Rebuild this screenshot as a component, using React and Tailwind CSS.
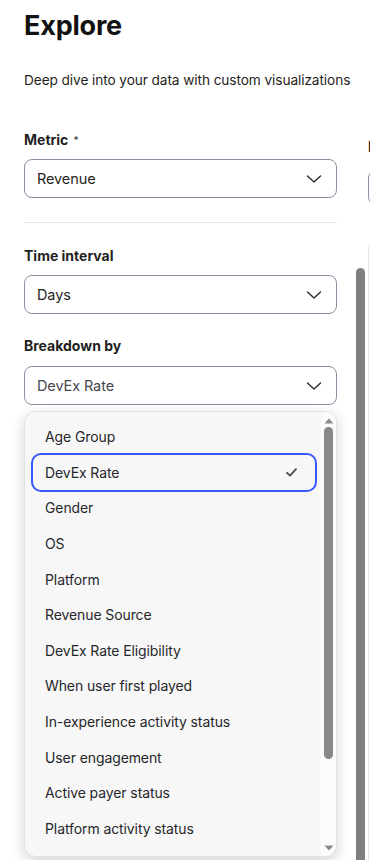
import React from "react";

const Chevron = () => (
  <svg width="16" height="10" viewBox="0 0 16 10" fill="none" className="shrink-0">
    <path d="M1.5 2 L8 8 L14.5 2" stroke="#2b2b2b" strokeWidth="1.4" strokeLinecap="round" strokeLinejoin="round" />
  </svg>
);

const Select = ({ value, muted }) => (
  <div className="flex h-[39px] items-center justify-between rounded-lg border border-[#8c90a2] bg-white pl-[12px] pr-[14px]">
    <span className={`text-[14.5px] tracking-[-0.1px] ${muted ? "text-[#45474f]" : "text-[#1f1f22]"}`}>{value}</span>
    <Chevron />
  </div>
);

const items = [
  "Age Group",
  "DevEx Rate",
  "Gender",
  "OS",
  "Platform",
  "Revenue Source",
  "DevEx Rate Eligibility",
  "When user first played",
  "In-experience activity status",
  "User engagement",
  "Active payer status",
  "Platform activity status",
];

const Up = ({ color = "#8a8a8a" }) => (
  <svg width="10" height="6" viewBox="0 0 10 6"><path d="M5 0.5 L9.5 5.5 L0.5 5.5 Z" fill={color} /></svg>
);
const Down = ({ color = "#8a8a8a" }) => (
  <svg width="10" height="6" viewBox="0 0 10 6"><path d="M0.5 0.5 L9.5 0.5 L5 5.5 Z" fill={color} /></svg>
);

export default function App() {
  return (
    <div className="flex h-[860px] w-[370px] overflow-hidden bg-white font-['Inter',sans-serif] text-[#1f1f22]">
      <div className="relative w-[348px] shrink-0 pl-6 pr-[11px] pt-[9px]">
        <h1 className="text-[27px] font-bold leading-[34px] tracking-[-0.2px] text-[#121214]">Explore</h1>
        <p className="mt-[27px] whitespace-nowrap text-[13.7px] leading-5 tracking-[-0.1px] text-[#1f1f22]">Deep dive into your data with custom visualizations</p>

        <div className="mt-[40px] flex items-center gap-[5px] text-[14px] font-bold leading-5 text-[#1f1f22]">
          Metric <span className="text-[10px] text-[#55575f]">*</span>
        </div>
        <div className="mt-[9px]">
          <Select value="Revenue" />
        </div>

        <div className="mt-[24px] h-px bg-[#e4e4e6]" />

        <div className="mt-[23px] text-[14px] font-bold leading-5">Time interval</div>
        <div className="mt-[9px]">
          <Select value="Days" />
        </div>

        <div className="mt-[22px] text-[14px] font-bold leading-5">Breakdown by</div>
        <div className="relative mt-[10px]">
          <Select value="DevEx Rate" muted />
          <div className="absolute left-0 right-0 top-[45px] flex h-[446px] overflow-hidden rounded-xl border border-[#e2e2e4] bg-[#f7f7f7] shadow-[0_4px_14px_rgba(0,0,0,0.18)]">
            <div className="flex-1 pl-[8px] pr-[6px] pt-[7px]">
              {items.map((it) => {
                const sel = it === "DevEx Rate";
                return (
                  <div
                    key={it}
                    className={`flex h-[35.6px] items-center justify-between rounded-lg pl-[12px] pr-[18px] text-[14px] tracking-[-0.1px] text-[#26272b] ${
                      sel ? "outline-2 outline-[#3658ff]" : ""
                    }`}
                  >
                    <span>{it}</span>
                    {sel && (
                      <svg width="11" height="9" viewBox="0 0 11 9">
                        <path d="M1 4.8 L4 7.6 L10 1.2" stroke="#4a4a4e" strokeWidth="1.8" fill="none" strokeLinecap="round" strokeLinejoin="round" />
                      </svg>
                    )}
                  </div>
                );
              })}
            </div>
            <div className="flex w-[15px] flex-col items-center bg-[#fbfbfb] pt-[6px]">
              <Up />
              <div className="mt-[3px] h-[332px] w-[9px] rounded-full bg-[#888888]" />
              <div className="mt-auto mb-[5px]">
                <Down />
              </div>
            </div>
          </div>
        </div>
      </div>

      <div className="flex w-[20px] shrink-0 flex-col items-center pl-[4px] pt-[128px]">
        <Up color="#7d7d7d" />
        <div className="mt-[140px] h-[600px] w-[9px] shrink-0 rounded-full bg-[#7f7f7f]" />
      </div>

      <div className="min-w-0 flex-1 overflow-hidden pt-[137px]">
        <div className="whitespace-nowrap text-[14px] font-bold leading-5 text-[#1f1f22]">Metric</div>
        <div className="mt-[13px] h-[35px] w-[200px] rounded-lg border border-[#8c90a2]" />
        <div className="mt-[32px] h-[700px] w-[300px] rounded-xl border border-[#e4e4e6]" />
      </div>
    </div>
  );
}
